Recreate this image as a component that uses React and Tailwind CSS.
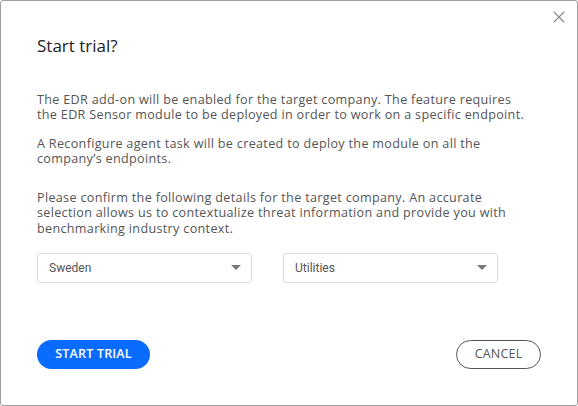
import { X } from "lucide-react";

const Select = ({ value }) => (
    <div className="flex h-[30px] w-[215px] items-center justify-between rounded-[3px] border border-[#dcdcdc] bg-white pl-[11px] pr-[10px] font-['Roboto',sans-serif] text-[12px] text-[#555]">
        <span>{value}</span>
        <svg width="10" height="6" viewBox="0 0 10 6">
            <path d="M0 0h10L5 5z" fill="#777" />
        </svg>
    </div>
);

export default function App() {
    return (
        <div className="h-[406px] w-[578px] bg-white">
            <div className="relative flex h-full w-full flex-col rounded-[3px] border border-[#9e9e9e] px-[36px] font-['Open_Sans',sans-serif]">
                <button className="absolute right-[8px] top-[6px] text-[#888]">
                    <X size={20} strokeWidth={1.3} />
                </button>
                <h2 className="mt-[32px] text-[17px] text-[#222]">Start trial?</h2>
                <div className="mt-[33px] text-[12.6px] leading-[15.5px] tracking-[0.32px] text-[#555]">
                    <p>
                        The EDR add-on will be enabled for the target company. The feature requires
                        <br />
                        the EDR Sensor module to be deployed in order to work on a specific endpoint.
                    </p>
                    <p className="mt-[13px]">
                        A Reconfigure agent task will be created to deploy the module on all the
                        <br />
                        company’s endpoints.
                    </p>
                    <p className="mt-[23px]">
                        Please confirm the following details for the target company. An accurate
                        <br />
                        selection allows us to contextualize threat information and provide you with
                        <br />
                        benchmarking industry context.
                    </p>
                </div>
                <div className="mt-[17px] flex gap-[31px]">
                    <Select value="Sweden" />
                    <Select value="Utilities" />
                </div>
                <div className="mt-[57px] flex items-center justify-between">
                    <button className="h-[29px] w-[113px] rounded-full bg-[#0a6cff] text-[12.5px] font-semibold tracking-[0.2px] text-white">
                        START TRIAL
                    </button>
                    <button className="h-[29px] w-[85px] rounded-full border border-[#555] text-[12.5px] tracking-[0.2px] text-[#555]">
                        CANCEL
                    </button>
                </div>
            </div>
        </div>
    );
}
